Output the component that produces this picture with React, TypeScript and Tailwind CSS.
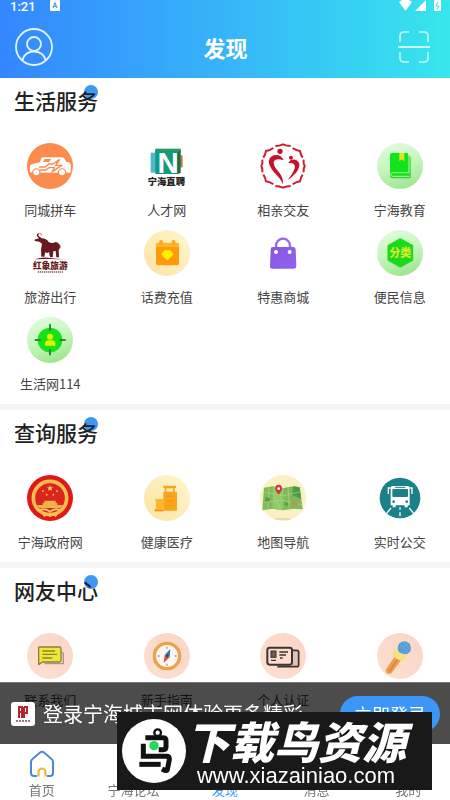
import type { ReactNode } from 'react';

interface Service {
  label: string;
  icon: ReactNode;
  hideLabel?: boolean;
}

interface SectionProps {
  title: string;
  items: Service[];
}

function Icon({ children }: { children: ReactNode }) {
  return (
    <svg viewBox="0 0 138 138" className="h-[46px] w-[46px]" aria-hidden="true">
      {children}
    </svg>
  );
}

function Gradients() {
  return (
    <svg className="absolute h-0 w-0" aria-hidden="true">
      <defs>
        <linearGradient id="lime" x1="0.3" y1="0" x2="0.6" y2="1">
          <stop offset="0" stopColor="#dffcdc" />
          <stop offset="0.5" stopColor="#c6f5bd" />
          <stop offset="1" stopColor="#9fe58f" />
        </linearGradient>
        <linearGradient id="cream" x1="1" y1="0" x2="0" y2="1">
          <stop offset="0" stopColor="#fff6cf" />
          <stop offset="1" stopColor="#fde2a2" />
        </linearGradient>
        <linearGradient id="violet" x1="0" y1="0" x2="1" y2="1">
          <stop offset="0" stopColor="#8a55e0" />
          <stop offset="1" stopColor="#8f63f2" />
        </linearGradient>
        <linearGradient id="peach" x1="1" y1="0" x2="0" y2="1">
          <stop offset="0" stopColor="#fbd5c6" />
          <stop offset="1" stopColor="#fde0d0" />
        </linearGradient>
      </defs>
    </svg>
  );
}

const carpool = (
  <Icon>
    <circle cx="69" cy="69" r="69" fill="#fb8c4e" />
    <path
      d="M9 68 L14 64 L39 58 L42 47 Q44 43 50 43 H104 Q110 43 113 48 L118 57 L128 58 V62 L131 63 V89 H118 A13 13 0 0 0 92 89 H41 A13 13 0 0 0 15 89 L9 86 Z"
      fill="#fff"
    />
    <circle cx="28" cy="88" r="9" fill="#fff" />
    <circle cx="105" cy="88" r="9" fill="#fff" />
    <path d="M48 57 L53 48 H73 L66 57 Z" fill="#fb8c4e" />
    <path d="M36 72 H54 L66 63 H78 L98 49 L86 67 H104 L76 86 L82 74 H66 L56 81 H38" fill="none" stroke="#fb8c4e" strokeWidth="4" />
  </Icon>
);

const jobs = (
  <Icon>
    <rect x="20" y="29" width="16" height="60" fill="#4fb8cf" />
    <rect x="103" y="37" width="13" height="36" fill="#b98a2e" />
    <rect x="34" y="17" width="76" height="14" fill="#2f9a56" />
    <rect x="34" y="22" width="70" height="71" fill="#129b7c" />
    <path d="M100 30 L110 20 V90 L100 93 Z" fill="#1c6b54" />
    <text x="72" y="90" textAnchor="middle" fontSize="88" fontWeight="900" fill="#fff" fontFamily="Liberation Sans, sans-serif">N</text>
    <text x="67" y="127" textAnchor="middle" fontSize="28" fontWeight="900" fill="#222" fontFamily="Noto Sans CJK SC, sans-serif">宁海直聘</text>
  </Icon>
);

const dating = (
  <Icon>
    <g fill="none" stroke="#cb1f2c" strokeWidth="6">
      <path d="M46 9 Q57 9 69 4 Q81 9 92 9" />
      <path d="M98 15 Q107 22 120 24 Q122 36 128 44" />
      <path d="M131 50 Q129 60 134 69 Q129 79 131 88" />
      <path d="M128 95 Q122 103 120 115 Q107 117 98 124" />
      <path d="M92 129 Q81 129 69 134 Q57 129 46 129" />
      <path d="M40 124 Q31 117 18 115 Q16 103 10 95" />
      <path d="M7 88 Q9 79 4 69 Q9 60 7 50" />
      <path d="M10 44 Q16 36 18 24 Q31 22 40 15" />
    </g>
    <circle cx="60" cy="25" r="8" fill="#c8102a" />
    <circle cx="93" cy="44" r="6" fill="#c8102a" />
    <path d="M71 52 Q62 33 42 37 Q24 43 27 61 Q31 78 50 96 Q62 108 69 123 Q70 104 57 88 Q40 70 41 58 Q44 44 71 52 Z" fill="#c8102a" />
    <path d="M85 60 Q91 48 106 50 Q120 55 118 70 Q113 92 83 111 Q100 90 104 76 Q108 58 85 60 Z" fill="#c8102a" />
  </Icon>
);

const education = (
  <Icon>
    <circle cx="69" cy="69" r="69" fill="url(#lime)" />
    <path d="M96 38 q5 1 5 6 V101 q0 5 -5 5 H48 q-8 0 -9 -8" fill="#2bd52b" />
    <rect x="39" y="30" width="55" height="70" rx="5" fill="#12e41b" />
    <path d="M96 40 V89 H47 Q41 90 41 95 Q42 100 47 100 H97" fill="none" stroke="#b8f5b0" strokeWidth="3" />
    <path d="M67 30 H82 V55 L74 49 L67 55 Z" fill="#e8e01c" />
  </Icon>
);

const travel = (
  <Icon>
    <path
      d="M36 9 Q27 10 30 19 L36 25 L22 29 L24 33 L37 35 L45 41 L42 58 L43 80 H52 L55 66 Q61 72 66 66 L69 82 H77 L79 64 L86 63 L88 82 H96 L95 61 L99 52 Q98 38 86 36 Q76 42 65 36 Q58 25 44 25 L34 17 Z"
      fill="#681820"
    />
    <path d="M45 15 l-8 -6 M94 42 q9 4 4 14" fill="none" stroke="#681820" strokeWidth="2" />
    <path d="M22 88 Q48 80 69 84 T122 87 Q90 88 69 87 T22 88 Z" fill="#681820" />
    <text x="70" y="117" textAnchor="middle" fontSize="26" fontWeight="900" fill="#681820" fontFamily="Noto Sans CJK SC, sans-serif">红象旅游</text>
    <path d="M32 126 H108" stroke="#8e5b5f" strokeWidth="4" strokeDasharray="4 2" />
  </Icon>
);

const recharge = (
  <Icon>
    <circle cx="69" cy="69" r="69" fill="url(#cream)" />
    <rect x="36" y="39" width="69" height="67" rx="6" fill="#ff9a0a" />
    <path d="M36 51 V45 Q36 38 43 38 H98 Q105 38 105 45 V51 Z" fill="#ffb52b" />
    <rect x="46" y="30" width="11" height="15" rx="5" fill="#ffa61a" />
    <rect x="83" y="30" width="11" height="15" rx="5" fill="#ffa61a" />
    <path d="M61 62 H79 L87 73 L70 90 L53 73 Z" fill="#fff000" stroke="#fff000" strokeWidth="3" strokeLinejoin="round" />
  </Icon>
);

const shop = (
  <Icon>
    <path d="M48 62 V47 A21 21 0 0 1 90 47 V62" fill="none" stroke="#9a68e6" strokeWidth="7" />
    <path d="M39 51 H99 Q106 51 107 58 L109 109 Q109 116 102 116 H37 Q29 116 30 109 L32 58 Q32 51 39 51 Z" fill="url(#violet)" />
    <circle cx="48" cy="66" r="6" fill="#fff" />
    <circle cx="89" cy="66" r="6" fill="#fff" />
  </Icon>
);

const category = (
  <Icon>
    <circle cx="69" cy="69" r="69" fill="url(#lime)" />
    <path d="M70 27 L106 47 V90 L70 110 L34 90 V47 Z" fill="#19db1c" stroke="#19db1c" strokeWidth="5" strokeLinejoin="round" />
    <text x="70" y="80" textAnchor="middle" fontSize="33" fontWeight="900" fill="#d8ea2c" fontFamily="Noto Sans CJK SC, sans-serif">分类</text>
  </Icon>
);

const directory = (
  <Icon>
    <circle cx="69" cy="69" r="69" fill="url(#lime)" />
    <circle cx="69" cy="69" r="37" fill="#14e317" />
    <path d="M69 22 V41 M69 97 V115 M23 69 H41 M97 69 H116" stroke="#2a8c2e" strokeWidth="6" />
    <circle cx="69" cy="59" r="9" fill="#dff000" />
    <path d="M54 86 V80 Q54 70 65 70 H74 Q85 70 85 80 V86 Z" fill="#dff000" />
  </Icon>
);

const government = (
  <Icon>
    <circle cx="69" cy="69" r="69" fill="#e01818" />
    <circle cx="69" cy="69" r="50" fill="#d92420" stroke="#f4bd50" strokeWidth="11" />
    <path d="M69 31 l3 6 6 0 -5 4 2 6 -6 -3 -6 3 2 -6 -5 -4 6 0 Z" fill="#f6c85a" />
    <g fill="#f0b24a">
      <circle cx="48" cy="48" r="3" />
      <circle cx="90" cy="48" r="3" />
      <circle cx="59" cy="59" r="3" />
      <circle cx="79" cy="59" r="3" />
      <path d="M52 77 H86 V83 H91 V91 H47 V83 H52 Z" />
      <path d="M30 90 H108 L101 99 H37 Z" />
    </g>
    <path d="M38 106 Q54 98 69 110 Q84 98 100 106" fill="none" stroke="#f6c85a" strokeWidth="6" />
    <path d="M46 119 h12 l-5 8 Z M63 119 h12 l-6 8 Z M80 119 h12 l-7 8 Z" fill="#f6c85a" />
  </Icon>
);

const health = (
  <Icon>
    <circle cx="69" cy="69" r="69" fill="url(#cream)" />
    <path d="M58 32 H96 V39 H92 V50 H96 Q99 50 99 54 V107 H58 V54 Q58 50 62 50 V39 H58 Z" fill="#f9a51b" />
    <path d="M67 40 H87 V50 H67 Z" fill="#fee9b0" />
    <path d="M34 72 H58 V107 H32 V101 H36 V79 H34 Z" fill="#fbb62a" />
    <path d="M68 64 H90 M68 78 H90 M68 92 H90" stroke="#f3981a" strokeWidth="4" />
    <path d="M32 107 H58" stroke="#ee8e12" strokeWidth="4" />
  </Icon>
);

const map = (
  <Icon>
    <circle cx="69" cy="69" r="69" fill="#fcefc4" />
    <path d="M12 38 L38 34 L70 39 L100 34 L119 37 L128 103 L100 101 L69 106 L38 101 L7 106 Z" fill="#7dbb58" />
    <path d="M38 34 L70 39 L69 106 L38 101 Z" fill="#93c968" />
    <path d="M100 34 L119 37 L124 72 L96 60 Z" fill="#4c9a4a" />
    <path d="M14 52 L70 62 L122 50 M10 82 L69 76 L126 90 M28 38 L24 100 M84 38 L88 102 M46 66 L60 100" fill="none" stroke="#b3d68a" strokeWidth="2" />
    <path d="M92 84 q14 -14 22 2 q-8 12 -22 -2" fill="#b39a5a" />
    <path d="M18 66 l12 4 l-4 10 l-12 -2 Z M74 82 l10 2 v8 l-10 -2 Z" fill="#4fa04a" />
    <path d="M56 59 Q44 45 46 39 A10 10 0 0 1 66 39 Q68 45 56 59 Z" fill="#cf3a3f" />
    <circle cx="56" cy="41" r="4" fill="#fff" />
    <path d="M46 132 H90" stroke="#bcae8d" strokeWidth="2" />
  </Icon>
);

const bus = (
  <Icon>
    <circle cx="69" cy="69" r="61" fill="#1b8189" />
    <path d="M46 33 H93 Q98 33 98 39 V91 H92 V97 H83 V91 H56 V97 H47 V91 H41 V39 Q41 33 46 33 Z" fill="#fff" />
    <rect x="46" y="42" width="47" height="24" rx="3" fill="#1b8189" />
    <path d="M54 37 H85" stroke="#1b8189" strokeWidth="3" />
    <circle cx="50" cy="80" r="4" fill="#1b8189" />
    <circle cx="89" cy="80" r="4" fill="#1b8189" />
    <path d="M41 39 H34 V57 M98 39 H105 V57" fill="none" stroke="#fff" strokeWidth="4" />
    <path d="M69 97 V104 M69 112 V124 M42 99 L29 115 M97 99 L110 115" stroke="#fff" strokeWidth="4" />
  </Icon>
);

const contact = (
  <Icon>
    <circle cx="69" cy="69" r="69" fill="url(#peach)" />
    <path d="M103 58 H105 Q109 58 109 63 V92 H52" fill="none" stroke="#a59685" strokeWidth="4" />
    <path d="M38 42 H97 Q102 42 102 47 V82 Q102 87 97 87 H46 L35 95 V47 Q34 42 38 42 Z" fill="#efe63a" stroke="#8f7f3c" strokeWidth="4" strokeLinejoin="round" />
    <path d="M46 54 H84 M46 64 H90 M46 75 H76" stroke="#8f8530" strokeWidth="4" />
  </Icon>
);

const guide = (
  <Icon>
    <circle cx="69" cy="69" r="69" fill="url(#peach)" />
    <circle cx="69" cy="69" r="38" fill="#faf7f2" stroke="#e9a34c" strokeWidth="10" />
    <path d="M69 41 v6 M69 92 v6 M41 69 h6 M92 69 h6" stroke="#c58b75" strokeWidth="4" />
    <path d="M79 48 L77 73 L62 66 Z" fill="#3f6fae" />
    <path d="M59 90 L62 66 L77 73 Z" fill="#d0584a" />
    <circle cx="69" cy="69" r="4" fill="#2d4a72" />
  </Icon>
);

const identity = (
  <Icon>
    <circle cx="69" cy="69" r="69" fill="url(#peach)" />
    <path d="M97 52 H110 Q116 52 116 58 V95 Q116 101 110 101 H52" fill="#dcc5b8" stroke="#3d332f" strokeWidth="5" />
    <rect x="22" y="44" width="74" height="51" rx="7" fill="#fbdccd" stroke="#3d332f" strokeWidth="6" />
    <rect x="33" y="54" width="15" height="19" fill="#6a5b54" stroke="#3d332f" strokeWidth="3" />
    <path d="M33 82 H48 M58 57 H84 M58 66 H78 M60 75 H68" stroke="#3d332f" strokeWidth="4" />
  </Icon>
);

const broadcast = (
  <Icon>
    <circle cx="69" cy="69" r="69" fill="url(#peach)" />
    <path d="M54 70 L73 80 L44 119 Q36 126 28 119 Q25 115 27 109 Z" fill="#f09a4c" />
    <path d="M62 78 L38 114" stroke="#d97f36" strokeWidth="4" />
    <circle cx="82" cy="45" r="20" fill="#559fd6" />
    <path d="M70 36 L94 60 M78 29 L101 50 M94 30 L72 50" stroke="#76b4e0" strokeWidth="2" />
    <path d="M54 46 Q66 64 91 64 L85 79 Q76 87 61 79 Q46 72 46 61 Z" fill="#f7df83" />
  </Icon>
);

const sections: SectionProps[] = [
  {
    title: '生活服务',
    items: [
      { label: '同城拼车', icon: carpool },
      { label: '人才网', icon: jobs },
      { label: '相亲交友', icon: dating },
      { label: '宁海教育', icon: education },
      { label: '旅游出行', icon: travel },
      { label: '话费充值', icon: recharge },
      { label: '特惠商城', icon: shop },
      { label: '便民信息', icon: category },
      { label: '生活网114', icon: directory },
    ],
  },
  {
    title: '查询服务',
    items: [
      { label: '宁海政府网', icon: government },
      { label: '健康医疗', icon: health },
      { label: '地图导航', icon: map },
      { label: '实时公交', icon: bus },
    ],
  },
  {
    title: '网友中心',
    items: [
      { label: '联系我们', icon: contact },
      { label: '新手指南', icon: guide },
      { label: '个人认证', icon: identity },
      { label: '广播', icon: broadcast, hideLabel: true },
    ],
  },
];

function StatusBar() {
  return (
    <div className="flex h-[14px] items-start justify-between pr-2 pl-[10px] text-white">
      <div className="flex items-start gap-[14px]">
        <span className="font-[Roboto,sans-serif] text-[13px] leading-[14px] font-medium">1:21</span>
        <svg viewBox="0 0 10 11" className="h-[11px] w-[10px]" aria-hidden="true">
          <rect width="10" height="11" rx="1" fill="#fff" />
          <path d="M3 8 L5 3 L7 8 M4 6.500 H6" fill="none" stroke="#4b9af5" strokeWidth="1.200" />
        </svg>
      </div>
      <svg viewBox="0 0 44 12" className="h-3 w-11" aria-hidden="true">
        <path d="M1 2 Q7.500 -3 14 2 L7.500 11 Z" fill="#fff" />
        <path d="M28 0 V11 H17 Z" fill="#fff" />
        <rect x="36" y="0" width="7" height="11" rx="1" fill="#fff" />
        <path d="M40 2 L38 6 H41 L39 9" fill="none" stroke="#3bd8ee" />
      </svg>
    </div>
  );
}

function Header() {
  return (
    <header className="bg-linear-to-r from-[#3586ff] via-[#37b4f8] to-[#38e6ec]">
      <StatusBar />
      <div className="flex h-16 items-center justify-between pt-[2px] pr-5 pl-[15px]">
        <button aria-label="个人中心">
          <svg viewBox="0 0 38 38" className="h-[38px] w-[38px]" fill="none" stroke="#e6f4ff" strokeWidth="1.800">
            <circle cx="19" cy="19" r="18" />
            <circle cx="19" cy="16" r="7" />
            <path d="M7.500 32.500 C9 20.500 29 20.500 30.500 32.500" />
          </svg>
        </button>
        <h1 className="text-[22px] leading-8 font-bold text-white">发现</h1>
        <button aria-label="扫一扫">
          <svg viewBox="0 0 32 34" className="h-[34px] w-8" fill="none" stroke="#c9f5fb" strokeWidth="1.600">
            <path d="M2 12 V6 Q2 2 6 2 H11 M21 2 H26 Q30 2 30 6 V12 M30 22 V28 Q30 32 26 32 H21 M11 32 H6 Q2 32 2 28 V22" />
            <path d="M0 17 H32" strokeWidth="2" />
          </svg>
        </button>
      </div>
    </header>
  );
}

function Section({ title, items }: SectionProps) {
  return (
    <section className="bg-white px-3 pt-[6px] pb-[10px]">
      <h2 className="relative isolate inline-block px-[2px] text-[21px] leading-8 font-medium text-[#222]">
        <span className="absolute top-[1px] right-[2px] -z-10 h-[14px] w-[14px] rounded-full bg-[#3d98f2]" />
        {title}
      </h2>
      <ul className="mt-[27px] grid grid-cols-4 gap-x-10 gap-y-[10px]">
        {items.map((item) => (
          <li key={item.label}>
            <a
              href="#"
              aria-label={item.hideLabel ? item.label : undefined}
              className="flex flex-col items-center gap-[11px]"
            >
              {item.icon}
              {!item.hideLabel && (
                <span className="text-[13px] leading-5 whitespace-nowrap text-[#444]">{item.label}</span>
              )}
            </a>
          </li>
        ))}
      </ul>
    </section>
  );
}

function LoginBar() {
  return (
    <div className="flex h-[62px] items-center border-t border-[#777] bg-black/70 px-[10px]">
      <svg viewBox="0 0 26 26" className="h-[26px] w-[26px] shrink-0" aria-hidden="true">
        <rect x="1" y="1" width="24" height="24" rx="3" fill="#fff" />
        <path d="M9 17 V6 H12 V17 M14 6 H17 V12 H14 M14 17 V6 M9 11 H12" fill="none" stroke="#b5232b" strokeWidth="2" />
        <path d="M6 20 H20" stroke="#7c4a4e" strokeWidth="1.500" strokeDasharray="2 1" />
      </svg>
      <p className="ml-[7px] flex-1 text-xl whitespace-nowrap text-white">登录宁海城市网体验更多精彩</p>
      <button className="h-9 w-[100px] rounded-full bg-[#3c96f5] text-lg leading-9 text-white">立即登录</button>
    </div>
  );
}

const tabs = ['首页', '宁海论坛', '发现', '消息', '我的'];

function TabBar() {
  return (
    <nav className="grid h-14 grid-cols-5 gap-x-8 bg-white px-3">
      {tabs.map((tab) => (
        <a
          key={tab}
          href="#"
          aria-current={tab === '发现' ? 'page' : undefined}
          className={
            tab === '发现'
              ? 'flex flex-col items-center justify-end text-[13px] leading-5 whitespace-nowrap text-[#3c96f5]'
              : 'flex flex-col items-center justify-end text-[13px] leading-5 whitespace-nowrap text-[#777]'
          }
        >
          {tab === '首页' && (
            <svg viewBox="0 0 26 28" className="mb-[2px] h-7 w-[26px]" fill="none" aria-hidden="true">
              <path d="M8 26 H5 Q2 26 2 23 V12 Q2 10 3.500 9 L11 2.500 Q13 1.200 15 2.500 L22.500 9 Q24 10 24 12 V23 Q24 26 21 26 H18" stroke="#4a86dc" strokeWidth="2" />
              <path d="M9.500 26.500 V22 A3.500 3.500 0 0 1 16.500 22 V26.500" stroke="#f2b33d" strokeWidth="2.200" />
            </svg>
          )}
          {tab}
        </a>
      ))}
    </nav>
  );
}

function SiteBanner() {
  return (
    <div className="absolute right-[18px] bottom-[10px] flex h-[78px] w-[315px] items-center bg-[#191919] pl-[5px] text-white">
      <svg viewBox="0 0 192 192" className="h-16 w-16 shrink-0" aria-hidden="true">
        <circle cx="96" cy="96" r="96" fill="#fff" />
        <g fill="none" stroke="#111" strokeWidth="15">
          <path d="M70 56 H122 Q132 56 132 64 V84 Q132 92 124 92 H110" />
          <path d="M64 74 V112 H134 Q143 113 142 122 L136 152 Q134 158 120 150" />
          <path d="M52 136 H116" />
        </g>
        <circle cx="107" cy="41" r="10" fill="none" stroke="#111" strokeWidth="7" />
        <circle cx="96" cy="80" r="14" fill="#22d95e" />
      </svg>
      <div className="flex flex-col items-center pt-[6px]">
        <span className="text-[44px] leading-[44px] font-black whitespace-nowrap italic">下载鸟资源</span>
        <span className='font-["Liberation_Sans",sans-serif] text-[22px] leading-7 whitespace-nowrap'>www.xiazainiao.com</span>
      </div>
    </div>
  );
}

export default function App() {
  return (
    <div className='min-h-screen bg-white font-["Noto_Sans_CJK_SC",sans-serif]'>
      <Gradients />
      <Header />
      <main className="flex flex-col gap-[6px] bg-[#f5f5f5]">
        {sections.map((section) => (
          <Section key={section.title} title={section.title} items={section.items} />
        ))}
      </main>
      <footer className="fixed inset-x-0 bottom-0">
        <LoginBar />
        <TabBar />
        <SiteBanner />
      </footer>
    </div>
  );
}
